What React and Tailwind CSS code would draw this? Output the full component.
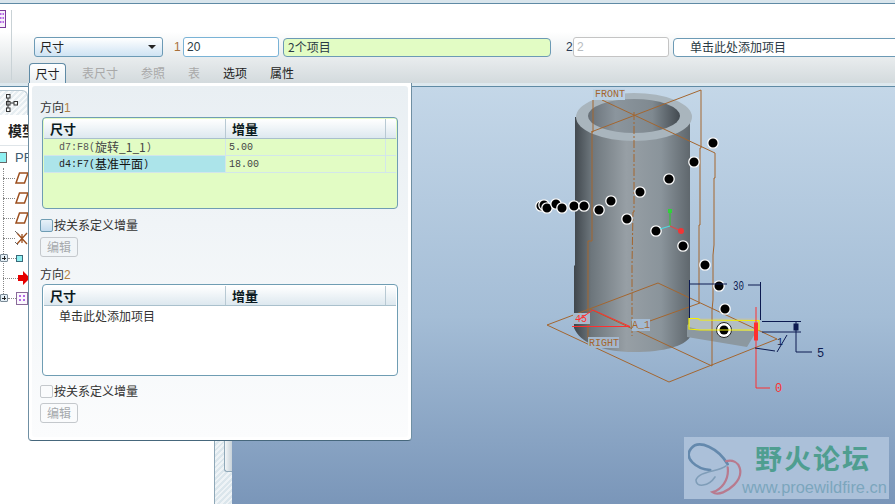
const sans = 'font-["Noto_Sans_CJK_SC","Liberation_Sans",sans-serif]';

function Drawing() {
  const dots = [[541,206],[544,205],[547,208],[556,204],[562,208],[574,206],[584,206],[599,210],[611,201],[627,219],[640,192],[656,231],[669,179],[683,246],[694,162],[713,143],[705,265],[719,286],[725,309]];
  const br = '#a4662f';
  const mono = "'Liberation Mono',monospace";
  return (
    <svg width="663" height="417" viewBox="232 87 663 417" className="block">
      <defs>
        <linearGradient id="cyl" x1="0" x2="1" y1="0" y2="0">
          <stop offset="0" stopColor="#3f464c" />
          <stop offset="0.15" stopColor="#6d767c" />
          <stop offset="0.45" stopColor="#979fa5" />
          <stop offset="0.75" stopColor="#8a949b" />
          <stop offset="1" stopColor="#5f676d" />
        </linearGradient>
        <linearGradient id="hole" x1="0" x2="1" y1="0" y2="0">
          <stop offset="0" stopColor="#687077" />
          <stop offset="0.3" stopColor="#8b959d" />
          <stop offset="0.7" stopColor="#7f8990" />
          <stop offset="1" stopColor="#434a50" />
        </linearGradient>
      </defs>
      <path d="M575 117 V265 L574 266 V328 C580 342 600 352 634 352 C665 352 684 346 690 337 V117 Z" fill="url(#cyl)" />
      <ellipse cx="634" cy="117" rx="58" ry="24" fill="#a9b5bd" />
      <ellipse cx="634" cy="116" rx="46" ry="17" fill="url(#hole)" />
      <path d="M687 325 V337 L747 347 L756 332 L700 318 Z" fill="#8c98a0" />
      <path d="M689 319 L698 318 H759 V331 L700 330 L689 327 Z" fill="#b3bec2" />
      <g fill="none" stroke={br} strokeWidth="1">
        <path d="M593 100 V132 H592 V241 H588 V338" />
        <path d="M602 100 L715 153 V178 L714 178 V245 L713 255 V300 L712 310 V366" />
        <path d="M591 132 L701 90 V148 H700 V225 H699 V303" />
        <path d="M634 112 V212 L633 212 L632 265 V336" strokeDasharray="8 2 2 2" />
        <path d="M547 325 L658 283 L777 339 L669 382 Z" />
        <path d="M590 309 L712 366" />
        <path d="M647 322 L700 303" />
      </g>
      <g stroke="#fff" strokeWidth="1.3" fill="#000">
        {dots.map(([x, y], i) => <circle key={i} cx={x} cy={y} r="5.2" />)}
      </g>
      <circle cx="724" cy="330" r="7.5" fill="#fff" stroke="#222" />
      <circle cx="724" cy="330" r="4.5" fill="#000" />
      <path d="M689 318.5 H698 L700 320 L759 320.5 V330 H700 L689 329 Z" fill="none" stroke="#f6f000" strokeWidth="1.2" />
      <path d="M670 226 V211" stroke="#35c13a" strokeWidth="1.2" />
      <rect x="668" y="209" width="4" height="4" fill="#2fd23a" />
      <path d="M670 226 L681 231" stroke="#e04848" strokeWidth="1.2" />
      <circle cx="681" cy="231" r="3" fill="#f03636" />
      <path d="M670 226 L660 229" stroke="#4fd9e0" strokeWidth="1.2" />
      <rect x="593" y="89" width="32" height="11" fill="#b9d0e4" />
      <text x="595" y="97" fontFamily={mono} fontSize="10" fill={br}>FRONT</text>
      <rect x="632" y="319" width="18" height="12" fill="#a3bad2" />
      <text x="632" y="328" fontFamily={mono} fontSize="10" fill={br}>A_1</text>
      <rect x="588" y="337" width="31" height="11" fill="#a3b7cc" />
      <text x="589" y="346" fontFamily={mono} fontSize="10" fill={br}>RIGHT</text>
      <rect x="573" y="313" width="17" height="11" fill="#a8b9cb" />
      <text x="575" y="322" fontFamily={mono} fontSize="10" fill="#ff3030">45</text>
      <g fill="none" stroke="#ff3030" strokeWidth="1">
        <path d="M572 326.5 H630 L593 310 L578 320" />
        <path d="M756 307 V388 H770" />
        <rect x="754.5" y="323" width="3" height="17" fill="#ff3030" />
      </g>
      <g fill="none" stroke="#0c1a50" strokeWidth="1">
        <path d="M689.5 280 V318 M690 284 H727 M748 285 H760 M760.5 282 V320" />
        <path d="M762 321.5 H801 M762 332 H801 M796 321 V352 H812" />
        <rect x="794" y="324" width="4" height="6" fill="#0c1a50" />
        <path d="M755 348 L775 351 M777 352 L787 335" />
      </g>
      <text x="733" y="290" fontFamily={mono} fontSize="12" fill="#0c1a50" textLength="11" lengthAdjust="spacingAndGlyphs">30</text>
      <text x="817" y="357" fontFamily={mono} fontSize="12" fill="#0c1a50">5</text>
      <text x="775" y="392" fontFamily={mono} fontSize="12" fill="#ff3030">0</text>
      <text x="777" y="345" fontFamily={mono} fontSize="10" fill="#0c1a50">1</text>
    </svg>
  );
}

function Parallelogram() {
  return (
    <svg width="14" height="12" viewBox="0 0 14 12" className="shrink-0">
      <path d="M4.5 1 H13 L9.5 11 H1 Z" fill="none" stroke="#9c4f1e" strokeWidth="1.5" />
    </svg>
  );
}

function Plus() {
  return (
    <div className="relative w-[8px] h-[8px] shrink-0 border border-[#7a8a96] rounded-[1px] bg-[#e4eff6]">
      <div className="absolute left-[1px] top-[2.5px] w-[4px] h-px bg-[#222]" />
      <div className="absolute left-[2.5px] top-[1px] w-px h-[4px] bg-[#222]" />
    </div>
  );
}

function Dots({ w = 'w-[12px] ml-[3px]' }) {
  return <span className={`${w} border-t border-dotted border-[#888] shrink-0`} />;
}

function Tree() {
  const rowCls = 'h-[20px] flex items-center';
  return (
    <div className="relative mt-[1px]">
      <div className="h-[21px] flex items-center gap-[8px]">
        <div className="w-[7px] h-[11px] bg-[#8ff0f2] border border-[#666] border-l-0" />
        <span className={`text-[13px] text-[#3d5a70] font-["Liberation_Sans",sans-serif]`}>PR</span>
      </div>
      <div className="absolute left-[3px] top-[21px] h-[130px] border-l border-dotted border-[#888]" />
      <div className={rowCls}><Dots /><Parallelogram /></div>
      <div className={rowCls}><Dots /><Parallelogram /></div>
      <div className={rowCls}><Dots /><Parallelogram /></div>
      <div className={rowCls}>
        <Dots />
        <svg width="14" height="17" viewBox="0 0 14 17" className="shrink-0">
          <path d="M2 3 L12 14 M12 3 L2 14 M7 4 V13" stroke="#9c4f1e" strokeWidth="1.3" fill="none" />
          <path d="M0 1 L3 4 M0 12 L3 15" stroke="#666" fill="none" />
        </svg>
      </div>
      <div className={rowCls}>
        <Plus />
        <Dots w="w-[8px]" />
        <div className="w-[7px] h-[7px] bg-[#8ff0f2] border border-[#3a6a7a] shrink-0" />
      </div>
      <div className={rowCls}>
        <Dots w="w-[15px] ml-[3px]" />
        <svg width="12" height="14" viewBox="0 0 12 14" className="shrink-0"><path d="M0 4 H5 V0 L12 7 L5 14 V10 H0 Z" fill="#e60000" /></svg>
      </div>
      <div className={rowCls}>
        <Plus />
        <Dots w="w-[8px]" />
        <svg width="12" height="13" viewBox="0 0 12 13" className="shrink-0">
          <rect x="0.5" y="0.5" width="11" height="12" fill="#fbf8fd" stroke="#8a6a9a" />
          <path d="M3 4 H5 M7 4 H9 M3 8 H5 M7 8 H9" stroke="#a03ae0" strokeWidth="1.5" />
        </svg>
      </div>
    </div>
  );
}

function Field({ className, children }) {
  return <div className={`h-[19px] shrink-0 flex items-center text-[12px] text-[#2a3a44] ${className}`}>{children}</div>;
}

function DirBlock({ n, fill, active, rows, checkGap }) {
  return (
    <div>
      <div className={`h-[16px] overflow-hidden text-[12px] leading-[16px] text-[#333] ${sans}`}>方向<span className="text-[#b08040] font-['Liberation_Sans']">{n}</span></div>
      <div className={`mt-[2px] ml-[2px] w-[356px] h-[92px] border border-[#6f9db3] rounded-[4px] p-px flex flex-col overflow-hidden ${fill}`}>
        <div className="h-[20px] shrink-0 flex items-center bg-gradient-to-b from-white to-[#dde8ef] border-b border-[#a9c0cc] text-[13px] font-bold text-[#0b1a22]">
          <div className="w-[182px] pl-[6px] border-r border-[#b8c9d3] h-full flex items-center">尺寸</div>
          <div className="w-[160px] pl-[6px] border-r border-[#b8c9d3] h-full flex items-center">增量</div>
        </div>
        {rows}
      </div>
      <div className={`flex items-center h-[14px] ${checkGap}`}>
        <div className={`w-[13px] h-[13px] rounded-[2px] border ${active ? 'border-[#6f9db3] bg-gradient-to-b from-[#e8f1f8] to-[#c4dbee]' : 'border-[#c4c8cc] bg-[#fafbfc]'}`} />
        <span className={`ml-px text-[12px] text-[#333] ${sans}`}>按关系定义增量</span>
      </div>
      <div className={`mt-[5px] w-[38px] h-[20px] border border-[#c4c8cc] rounded-[3px] flex items-center justify-center text-[12px] text-[#a5a9ac] ${sans}`}>编辑</div>
    </div>
  );
}

function Row({ left, right, selected }) {
  return (
    <div className="h-[17px] flex border-b border-[#d3e6ea] text-[12px]">
      <div className={`w-[182px] pl-[15px] flex items-center border-r border-[#d3e6ea] ${selected ? 'bg-[#ace4ea]' : ''}`}>{left}</div>
      <div className="w-[160px] pl-[3px] flex items-center border-r border-[#d3e6ea] text-[#444] font-['Liberation_Mono'] text-[10px]">{right}</div>
    </div>
  );
}

function Dim({ a, b, dark }) {
  return (
    <>
      <span className={`font-['Liberation_Mono'] text-[10px] ${dark ? 'text-[#222]' : 'text-[#555]'}`}>{a}(</span>
      <span className={`text-[12px] ${dark ? 'text-[#111]' : 'text-[#444]'}`}>{b}</span>
      <span className={`font-['Liberation_Mono'] text-[10px] ${dark ? 'text-[#222]' : 'text-[#555]'}`}>)</span>
    </>
  );
}

export default function App() {
  const tabs = [['表尺寸', 'text-[#a9a9a9]', 'w-[36px] ml-[16px]'], ['参照', 'text-[#a9a9a9]', 'w-[24px] ml-[23px]'], ['表', 'text-[#a9a9a9]', 'w-[12px] ml-[23px]'], ['选项', 'text-[#222]', 'w-[24px] ml-[23px]'], ['属性', 'text-[#222]', 'w-[24px] ml-[23px]']];
  return (
    <div className={`relative w-[895px] h-[504px] overflow-hidden bg-white ${sans}`}>
      <div className="h-[3px] bg-[#d9e5ec]" />
      <div className="h-[84px] border-y border-[#5f8aa5] flex flex-col">
        <div className="flex-1 min-h-0 bg-gradient-to-b from-white from-[35%] to-[#d3dadd] flex overflow-hidden">
          <svg width="6" height="18" viewBox="0 0 6 18" className="mt-[6px] shrink-0">
            <rect x="-2" y="0.5" width="7.5" height="17" fill="#f7f1fa" stroke="#7a3a9a" />
            <path d="M0 4 H4 M0 8 H4 M0 12 H4" stroke="#a03ae0" strokeWidth="1.5" strokeDasharray="1.5 1" />
          </svg>
          <div className="w-px h-[70px] mt-[6px] ml-[5px] shrink-0 bg-[#c9d2d6]" />
          <div className="flex flex-col ml-[22px] shrink-0">
            <div className="flex items-center mt-[33px] h-[20px]">
              <div className="w-[129px] h-[20px] shrink-0 border border-[#6c9ab5] rounded-[3px] bg-gradient-to-b from-white to-[#cfe3f3] flex items-center justify-between px-[5px] text-[12px] text-[#222]">
                <span>尺寸</span>
                <span className="w-0 h-0 border-x-[4px] border-x-transparent border-t-[4px] border-t-[#222] mr-[1px]" />
              </div>
              <span className="ml-[11px] text-[12px] text-[#a87038] font-['Liberation_Sans'] w-[9px] shrink-0">1</span>
              <Field className="w-[96px] !h-[20px] bg-white border border-[#7ab3d6] rounded-[3px] pl-[3px] font-['Liberation_Sans']">20</Field>
              <Field className="ml-[4px] w-[268px] bg-[#e2fcc4] border border-[#6c9ab5] rounded-[4px] pl-[4px]">2个项目</Field>
              <span className="ml-[15px] text-[12px] text-[#2a3a54] font-['Liberation_Sans'] w-[7px] shrink-0">2</span>
              <Field className="w-[96px] !h-[20px] bg-white border border-[#c4c4c4] rounded-[3px] pl-[3px] !text-[#b8bcc0] font-['Liberation_Sans']">2</Field>
              <Field className="ml-[4px] w-[240px] bg-white border border-[#6c9ab5] rounded-l-[4px] pl-[16px]">单击此处添加项目</Field>
            </div>
            <div className="flex items-start mt-[6px] -ml-[5px] h-[20px] text-[12px]">
              <div className="w-[37px] h-[21px] border-x border-t border-[#5f8aa5] rounded-t-[4px] bg-gradient-to-b from-white to-[#e9eff3] flex items-center justify-center text-[#222]">尺寸</div>
              {tabs.map(([t, c, w]) => <div key={t} className={`h-[20px] flex items-center justify-center whitespace-nowrap ${c} ${w}`}>{t}</div>)}
            </div>
          </div>
        </div>
        <div className="h-[3px] bg-[#dde8ee]" />
      </div>
      <div className="h-[417px] flex">
        <div className="w-[214px] bg-white pt-[3px]">
          <div className="w-[28px] h-[25px] border-t border-r border-[#b8c8d2] rounded-tr-[6px] bg-[repeating-linear-gradient(135deg,#e6edf1_0,#e6edf1_2px,#f8fafb_2px,#f8fafb_4px)] flex items-center pl-[5px]">
            <svg width="14" height="18" viewBox="0 0 14 18" fill="none" stroke="#333"><rect x="1.5" y="0.5" width="3.5" height="3.5" /><rect x="1.5" y="7.5" width="3.5" height="3.5" /><rect x="1.5" y="14" width="3.5" height="3.5" /><rect x="9" y="7.5" width="3.5" height="3.5" /><path d="M3 4 V14 M5 9 H9" /></svg>
          </div>
          <div className="h-[31px] flex items-center pl-[8px] text-[14px] font-bold text-[#222] border-b border-[#dfe5e9]">模型</div>
          <Tree />
        </div>
        <div className="w-[18px] border-l border-[#8fa8b8] bg-[repeating-linear-gradient(135deg,#dbe6ec_0,#dbe6ec_2px,#eef3f6_2px,#eef3f6_4px)] flex flex-col items-end">
          <div className="mt-[345px] w-[8px] h-[40px] bg-gradient-to-r from-[#f2f5f7] to-[#c7d2d9] border border-r-0 border-[#8fa8b8] rounded-bl-[3px]" />
        </div>
        <div className="flex-1 bg-gradient-to-b from-[#c4d7e8] via-[#a4bdd6] via-[55%] to-[#7a96b9]">
          <Drawing />
        </div>
      </div>

      <div className="absolute left-[28px] top-[83px] w-[384px] h-[358px] border-x border-b border-x-[#6f8fa3] border-b-[#46677c] rounded-b-[4px] bg-white p-[3px]">
        <div className="h-full rounded-[3px] bg-gradient-to-b from-[#e9eff3] to-[#fbfcfd] px-[8px] pt-[13px]">
          <DirBlock n="1" fill="bg-[#e2fcc4]" active checkGap="mt-[9px]" rows={<>
            <Row left={<Dim a="d7:F8" b="旋转_1_1" />} right="5.00" />
            <Row left={<Dim a="d4:F7" b="基准平面" dark />} right="18.00" selected />
          </>} />
          <div className="h-[9px]" />
          <DirBlock n="2" fill="bg-white" checkGap="mt-[8px]" rows={
            <div className="pl-[15px] pt-[1px] text-[12px] leading-[17px] text-[#333]">单击此处添加项目</div>
          } />
        </div>
      </div>

      <div className="absolute left-[684px] top-[437px] w-[205px] h-[62px] bg-[#abc0d9] flex items-start overflow-hidden pl-[4px] pt-[7px]">
        <svg width="54" height="54" viewBox="35 30 170 170" className="shrink-0 -mt-[2px]">
          <g fill="none" strokeLinecap="round">
            <path d="M160 100 C130 50 70 20 45 50 C20 80 60 115 105 118" stroke="#6489ad" strokeWidth="8" />
            <path d="M155 90 C200 80 215 130 180 165 C160 185 130 200 112 188 C140 180 165 150 160 110" stroke="#b87a8e" strokeWidth="7" />
            <path d="M155 105 C130 125 70 120 60 150 C60 175 100 170 120 140" stroke="#7f9db8" strokeWidth="5" />
          </g>
        </svg>
        <div className="flex flex-col items-start">
          <div className={`h-[28px] text-[27px] leading-[28px] font-bold tracking-[2px] text-[#4f9e90] whitespace-nowrap ml-[13px] ${sans}`}>野火论坛</div>
          <div className="mt-[6px] h-[18px] text-[16.4px] leading-[18px] text-[#7ba6bd] whitespace-nowrap font-['Liberation_Sans']">www.proewildfire.cn</div>
        </div>
      </div>
    </div>
  );
}
